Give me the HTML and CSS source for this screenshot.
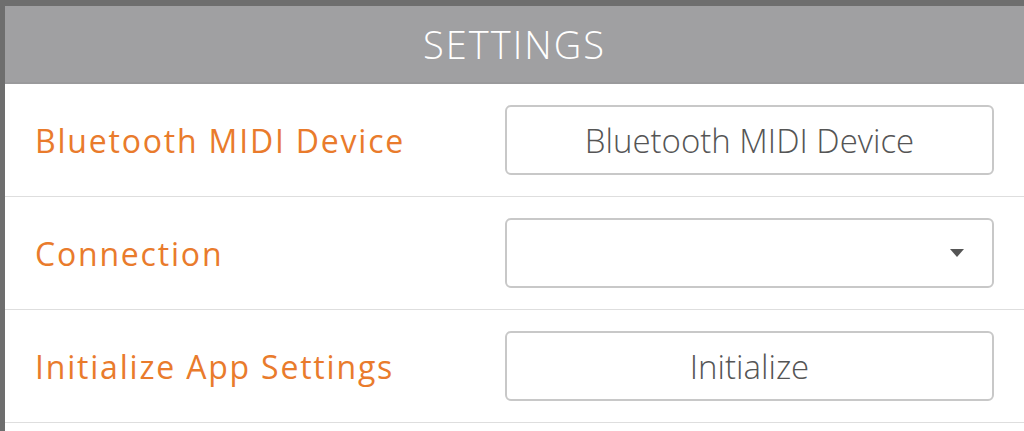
FILE: index.html
```html
<!DOCTYPE html>
<html lang="en">
<head>
    <meta charset="UTF-8">
    <meta name="viewport" content="width=device-width, initial-scale=1.0">
    <title>Settings</title>
    <link rel="stylesheet" href="styles.css">
</head>
<body>
    <div class="panel">
        <header class="panel-header">
            <h1>SETTINGS</h1>
        </header>

        <div class="setting-row">
            <span class="setting-label">Bluetooth MIDI Device</span>
            <button class="setting-control">Bluetooth MIDI Device</button>
        </div>

        <div class="setting-row">
            <span class="setting-label">Connection</span>
            <div class="setting-control select-control">
                <span class="select-value"></span>
                <svg class="select-arrow" width="16" height="10" viewBox="0 0 16 10">
                    <path d="M1 1 L15 1 L8 9 Z" fill="#555"/>
                </svg>
            </div>
        </div>

        <div class="setting-row">
            <span class="setting-label">Initialize App Settings</span>
            <button class="setting-control">Initialize</button>
        </div>
    </div>
</body>
</html>
```

FILE: styles.css
```css
/* Dark frame around the settings panel */
body {
    margin: 0;
    background-color: #6e6e6e;
    font-family: 'Open Sans', 'Noto Sans', sans-serif;
    height: 431px;
    overflow: hidden;
}

.panel {
    margin: 6px 0 0 5px;
    background-color: #ffffff;
    height: 425px;
}

/* Gray title bar */
.panel-header {
    background-color: #a0a0a2;
    height: 76px;
    border-bottom: 2px solid #9a9a9c;
    display: flex;
    align-items: center;
    justify-content: center;
}

.panel-header h1 {
    margin: 0;
    color: #ffffff;
    font-weight: 300;
    font-size: 38px;
    letter-spacing: 2px;
}

/* One line of the settings list */
.setting-row {
    height: 112px;
    border-bottom: 1px solid #dedede;
    display: flex;
    align-items: center;
    justify-content: space-between;
    padding: 0 30px;
}

.setting-label {
    color: #e97b2c;
    font-size: 32px;
    letter-spacing: 1.8px;
}

.setting-control {
    width: 489px;
    height: 70px;
    box-sizing: border-box;
    border: 2px solid #c8c8c8;
    border-radius: 6px;
    background-color: #ffffff;
    color: #555555;
    font-family: 'Open Sans', 'Noto Sans', sans-serif;
    font-weight: 300;
    font-size: 33px;
    padding: 0;
}

.select-control {
    display: flex;
    align-items: center;
    justify-content: flex-end;
    padding-right: 27px;
}
```
